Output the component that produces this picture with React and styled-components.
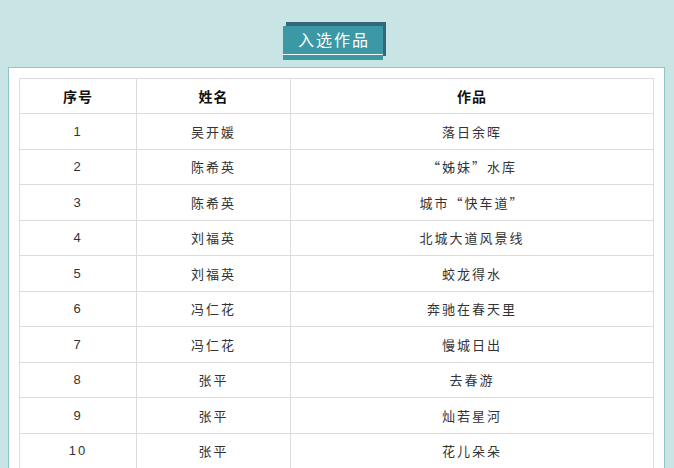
import React from "react";
import styled, { createGlobalStyle } from "styled-components";

const GlobalStyle = createGlobalStyle`
  html, body {
    margin: 0;
    padding: 0;
    background: #c9e4e5;
    font-family: "Liberation Sans", "Noto Sans CJK SC", sans-serif;
    overflow: hidden;
  }
`;

const rows = [
  ["1", "吴开媛", "落日余晖"],
  ["2", "陈希英", "“姊妹”水库"],
  ["3", "陈希英", "城市“快车道”"],
  ["4", "刘福英", "北城大道风景线"],
  ["5", "刘福英", "蛟龙得水"],
  ["6", "冯仁花", "奔驰在春天里"],
  ["7", "冯仁花", "慢城日出"],
  ["8", "张平", "去春游"],
  ["9", "张平", "灿若星河"],
  ["10", "张平", "花儿朵朵"],
];

function App() {
  return (
    <Page>
      <GlobalStyle />
      <TitleRow>
        <Title>入选作品</Title>
      </TitleRow>
      <Panel>
        <Table>
          <colgroup>
            <col style={{ width: 117 }} />
            <col style={{ width: 154 }} />
            <col />
          </colgroup>
          <thead>
            <tr>
              <Th>序号</Th>
              <Th>姓名</Th>
              <Th>作品</Th>
            </tr>
          </thead>
          <tbody>
            {rows.map((r) => (
              <tr key={r[0]}>
                <Td>{r[0]}</Td>
                <Td>{r[1]}</Td>
                <Td $cjk>{r[2]}</Td>
              </tr>
            ))}
          </tbody>
        </Table>
      </Panel>
    </Page>
  );
}

const Page = styled.div`
  width: 674px;
  height: 468px;
  padding-top: 26px;
  box-sizing: border-box;
`;

const TitleRow = styled.div`
  display: flex;
  justify-content: center;
  padding-right: 8px;
`;

const Title = styled.div`
  width: 100px;
  height: 34px;
  box-sizing: border-box;
  padding-bottom: 8px;
  display: flex;
  align-items: center;
  justify-content: center;
  color: #fff;
  font-size: 16px;
  letter-spacing: 2px;
  text-indent: 2px;
  background: linear-gradient(
    to bottom,
    #3c98a4 28px,
    #f4fbfb 28px,
    #f4fbfb 29.5px,
    #3c98a4 29.5px
  );
  box-shadow: 3px -4px 0 #33687a;
`;

const Panel = styled.div`
  margin: 7px 9px 0 8px;
  background: #fff;
  border: 1px solid #8fc6ca;
  padding: 10px 10px 0;
  height: 420px;
`;

const Table = styled.table`
  width: 100%;
  border-collapse: collapse;
  table-layout: fixed;
  border: 1px solid #dcdcdc;
`;

const Th = styled.th`
  height: 34px;
  border: 1px solid #dcdcdc;
  font-size: 14px;
  font-weight: bold;
  letter-spacing: 1px;
  color: #111;
  text-align: center;
  padding: 0;
`;

const Td = styled.td`
  height: 34.5px;
  border: 1px solid #dcdcdc;
  font-family: ${(p) =>
    p.$cjk
      ? `"Noto Sans CJK SC", sans-serif`
      : `"Liberation Sans", "Noto Sans CJK SC", sans-serif`};
  font-size: 13px;
  letter-spacing: 2px;
  color: #333;
  text-align: center;
  padding: 0;
`;

export default App;
